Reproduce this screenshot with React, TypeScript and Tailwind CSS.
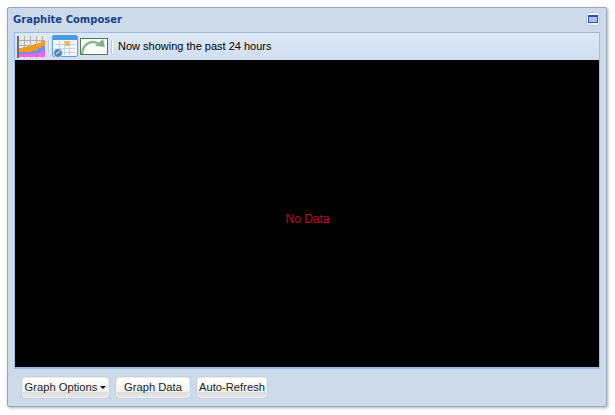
const font = { fontFamily: '"Liberation Sans", Arial, sans-serif' };

function GraphIcon() {
  return (
    <svg width="28" height="22" viewBox="0 0 28 22" className="block">
      <rect x="1" y="0" width="27" height="22" fill="#e6e6e2" />
      <path d="M1 4.5H28M1 9.5H28M1 14.5H28M7.5 0V22M13.5 0V22M19.5 0V22M25.5 0V22" stroke="#b0b0ac" strokeWidth="1" fill="none" />
      <path d="M2 12H6V11H10V10H14V9H17V8H21V7H24V5H28V21H2Z" fill="#f39a22" />
      <path d="M2 16H14V15H18V14H21V12H24V10H28V21H2Z" fill="#6f8fe6" />
      <path d="M2 18H18V17H24V15H28V21H2Z" fill="#fb5fe8" />
      <path d="M1 0V22" stroke="#6b6b6b" strokeWidth="2" />
    </svg>
  );
}

function CalendarIcon() {
  return (
    <svg width="26" height="23" viewBox="0 0 26 23" className="block">
      <rect x="0.5" y="0.5" width="25" height="21" rx="1.5" fill="#f2f6fb" stroke="#5d9fdc" />
      <rect x="1" y="1" width="24" height="4" fill="#4a9ae6" />
      <path d="M3 9.5H23M3 13.5H23M3 17.5H23M7.5 6V20M12.5 6V20M17.5 6V20" stroke="#c5d3e2" fill="none" />
      <rect x="13" y="6" width="5" height="5" fill="#f8b742" />
      <circle cx="6" cy="18" r="4.5" fill="#5d86b8" stroke="#d7e3f1" />
      <path d="M4 19L8 16" stroke="#ffffff" strokeWidth="1" />
    </svg>
  );
}

function RefreshIcon() {
  return (
    <svg width="28" height="17" viewBox="0 0 28 17" className="block">
      <rect x="0.5" y="0.5" width="27" height="16" fill="#ffffff" stroke="#4e7a52" />
      <path d="M2 16C2 10 6 5 12 4C16 3.5 18 5 20 7" stroke="#8fb98a" strokeWidth="2.5" fill="none" />
      <path d="M15 8L25 9L23 1Z" fill="#86b386" />
    </svg>
  );
}

function Sep() {
  return <div className="w-[1px] h-[13px] bg-[#b5c9e4] shadow-[1px_0_0_#ffffff]" />;
}

function Button({ label, width, arrow }: { label: string; width: string; arrow?: boolean }) {
  return (
    <button
      className={`${width} h-[21px] flex items-center justify-center gap-[3px] whitespace-nowrap rounded-[3px] border border-[#ececec] text-[11.2px] text-[#222] bg-[linear-gradient(#ffffff_0%,#f3f3f3_70%,#dcdcdc_75%,#e8e8e8_100%)] shadow-[0_0_1px_#8a8a8a]`}
    >
      {label}
      {arrow && <span className="w-0 h-0 mt-[1px] border-x-[3px] border-x-transparent border-t-[3px] border-t-black" />}
    </button>
  );
}

export default function App() {
  return (
    <div className="w-[615px] h-[415px] bg-white pl-[7px] pt-[7px]" style={font}>
      <div className="w-[600px] h-[400px] flex flex-col border border-[#97a8bd] rounded-[2px] bg-[#cddaea] shadow-[1px_1px_3px_#b0b0b0] px-[6px]">
        <div className="h-[24px] flex items-center justify-between shrink-0 pb-[2px]">
          <span className="font-bold text-[#15428b] text-[10px] ml-[-1px]" style={{ fontFamily: '"DejaVu Sans", sans-serif' }}>
            Graphite Composer
          </span>
          <div className="w-[14px] h-[14px] rounded-[3px] bg-[#f2f6fc] border border-[#b8cbe6] flex items-center justify-center">
            <div className="w-[10px] h-[8px] border border-[#2c4fa8] border-t-2 bg-[#a9c2e6]" />
          </div>
        </div>
        <div className="h-[28px] shrink-0 flex items-center pl-[2px] border border-[#99bbe8] border-b-0 bg-[linear-gradient(#dfe8f5,#d0def0)] text-[11px] text-black">
          <GraphIcon />
          <div className="ml-[3px]"><Sep /></div>
          <div className="ml-[3px]"><CalendarIcon /></div>
          <div className="ml-[2px]"><RefreshIcon /></div>
          <div className="ml-[3px]"><Sep /></div>
          <span className="ml-[6px]">Now showing the past 24 hours</span>
        </div>
        <div className="h-[309px] shrink-0 border-x border-b-2 border-[#99bbe8] bg-black flex items-center justify-center">
          <span className="text-[12px] text-[#c8002c] mt-[11px] ml-[1px]">No Data</span>
        </div>
        <div className="flex-1 flex items-center gap-[7px] pl-[8px] pb-[1px]">
          <Button label="Graph Options" width="w-[87px]" arrow />
          <Button label="Graph Data" width="w-[74px]" />
          <Button label="Auto-Refresh" width="w-[70px]" />
        </div>
      </div>
    </div>
  );
}
